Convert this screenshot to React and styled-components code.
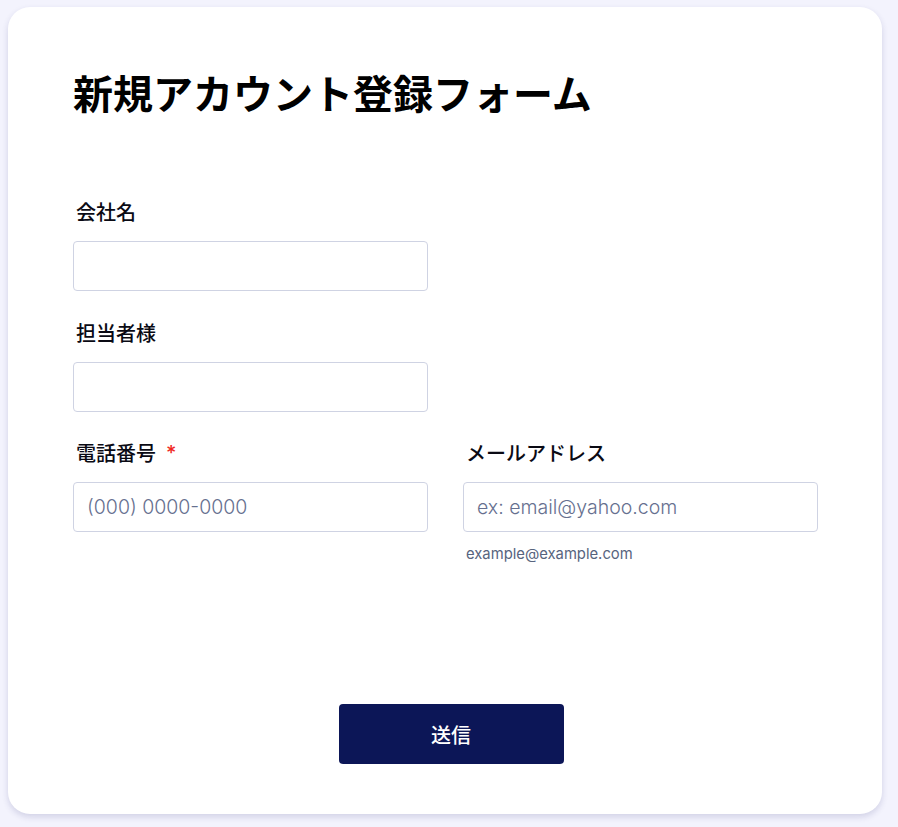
import React from "react";
import styled, { createGlobalStyle } from "styled-components";

const Global = createGlobalStyle`
  html, body { background: #f3f3fd; }
  body {
    margin: 0;
    padding: 7px 16px 13px 8px;
    font-family: "Noto Sans CJK JP", "Noto Sans", sans-serif;
  }
`;

const Card = styled.form`
  background: #ffffff;
  border-radius: 22px;
  box-shadow: 0 3px 6px rgba(40, 40, 110, 0.16);
  padding: 61px 64px 50px 65px;
  box-sizing: border-box;
  width: 874px;
  height: 807px;
  display: flex;
  flex-direction: column;
`;

const Title = styled.h1`
  margin: 0 0 82px;
  font-size: 40px;
  line-height: 48px;
  font-weight: 700;
  color: #000;
`;

const Grid = styled.div`
  display: grid;
  grid-template-columns: 355px 355px;
  column-gap: 35px;
  row-gap: 27.5px;
`;

const Field = styled.div`
  display: flex;
  flex-direction: column;
  grid-column: ${(p) => p.$col || "auto"};
`;

const Label = styled.label`
  font-size: 20px;
  line-height: 28px;
  font-weight: 500;
  color: #0a0a14;
  padding-left: 3px;
  margin-bottom: 15px;
  display: flex;
  align-items: center;
  gap: 10px;
`;

const Req = styled.span`
  color: #f0281e;
  font-size: 20px;
  font-family: "Inter", sans-serif;
`;

const Input = styled.input`
  box-sizing: border-box;
  width: 355px;
  height: 50px;
  border: 1px solid #cfd3e3;
  border-radius: 4px;
  background: #fff;
  padding: 0 13px;
  font-family: "Inter", sans-serif;
  font-size: 19.5px;
  font-weight: 300;
  color: #2c3345;
  outline: none;
  &::placeholder { color: #66708f; }
`;

const Help = styled.span`
  margin-top: 12px;
  padding-left: 3px;
  font-family: "Inter", sans-serif;
  font-size: 14.8px;
  line-height: 20px;
  color: #57647e;
`;

const Actions = styled.div`
  margin-top: auto;
  display: flex;
  justify-content: center;
  padding-left: 11px;
`;

const Submit = styled.button`
  width: 225px;
  height: 60px;
  border: none;
  border-radius: 4px;
  background: #0c1657;
  color: #fff;
  font-family: "Noto Sans CJK JP", sans-serif;
  font-size: 20px;
  font-weight: 500;
  cursor: pointer;
`;

export default function App() {
  return (
    <>
      <Global />
      <Card onSubmit={(e) => e.preventDefault()}>
        <Title>新規アカウント登録フォーム</Title>
        <Grid>
          <Field $col="1">
            <Label>会社名</Label>
            <Input type="text" />
          </Field>
          <Field $col="1">
            <Label>担当者様</Label>
            <Input type="text" />
          </Field>
          <Field $col="1">
            <Label>
              電話番号<Req>*</Req>
            </Label>
            <Input type="tel" placeholder="(000) 0000-0000" />
          </Field>
          <Field $col="2">
            <Label>メールアドレス</Label>
            <Input type="email" placeholder="ex: email@yahoo.com" />
            <Help>example@example.com</Help>
          </Field>
        </Grid>
        <Actions>
          <Submit type="submit">送信</Submit>
        </Actions>
      </Card>
    </>
  );
}
